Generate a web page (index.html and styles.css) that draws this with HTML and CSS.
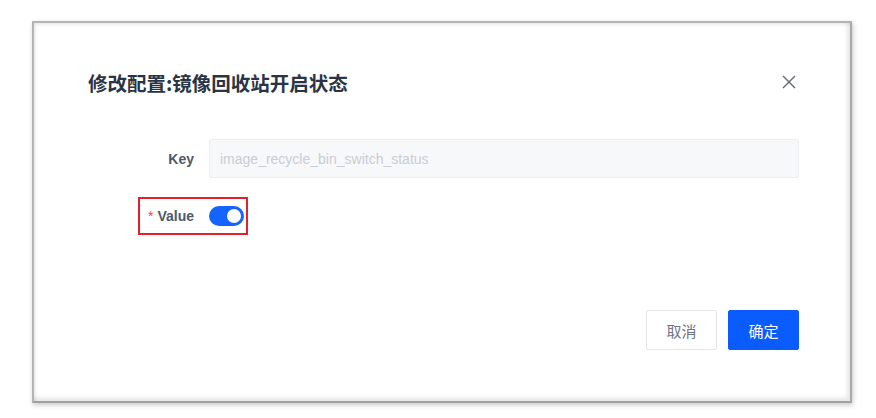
FILE: index.html
```html
<!DOCTYPE html>
<html lang="zh-CN">
<head>
<meta charset="utf-8">
<title>修改配置</title>
<link rel="stylesheet" href="styles.css">
</head>
<body>
<div class="frame">
  <div class="dialog">
    <div class="header">
      <h2 class="title">修改配置:镜像回收站开启状态</h2>
      <button class="close" aria-label="关闭">
        <svg width="14" height="14" viewBox="0 0 14 14"><path d="M1 1L13 13M13 1L1 13" stroke="#5c6677" stroke-width="1.4" fill="none"/></svg>
      </button>
    </div>
    <div class="form">
      <div class="row row-key">
        <label class="label">Key</label>
        <div class="input">image_recycle_bin_switch_status</div>
      </div>
      <div class="row row-value">
        <span class="mark"></span>
        <label class="label"><span class="req">*</span> Value</label>
        <div class="control"><span class="switch"><span class="knob"></span></span></div>
      </div>
    </div>
    <div class="footer">
      <button class="btn btn-cancel">取消</button>
      <button class="btn btn-ok">确定</button>
    </div>
  </div>
</div>
</body>
</html>
```
FILE: styles.css
```css
* { box-sizing: border-box; }
html, body { margin: 0; padding: 0; background: #ffffff; }
body { font-family: "Liberation Sans", "Noto Sans CJK SC", sans-serif; width: 876px; height: 418px; overflow: hidden; }

.frame {
  margin: 21px 0 0 32px;
  width: 820px;
  height: 382px;
  border: 2px solid #b4b4b4;
  border-right-color: #a8a8a8;
  border-bottom-color: #a0a0a0;
  box-shadow: 1px 2px 5px rgba(0,0,0,0.22), inset 2px 2px 3px rgba(0,0,0,0.08), inset -3px -3px 4px rgba(0,0,0,0.10);
  background: #ffffff;
}

.dialog {
  height: 100%;
  display: flex;
  flex-direction: column;
  padding: 0 51px 0 54px;
}

.header {
  display: flex;
  align-items: center;
  justify-content: space-between;
  height: 116px;
  padding-top: 2px;
}
.title {
  margin: 0;
  font-family: "Noto Sans CJK SC", sans-serif;
  font-size: 19.5px;
  font-weight: 700;
  color: #2b3445;
}
.close {
  border: 0;
  background: none;
  padding: 0;
  width: 14px;
  height: 14px;
  margin-right: 3px;
  display: flex;
}

.form {
  display: flex;
  flex-direction: column;
  gap: 19px;
}
.row {
  display: grid;
  grid-template-columns: 106px 1fr;
  column-gap: 15px;
  align-items: center;
  position: relative;
}
.label {
  text-align: right;
  font-size: 14px;
  font-weight: 700;
  color: #4e5969;
}
.req { color: #f53f3f; font-weight: 400; }
.input {
  height: 39px;
  width: 590px;
  background: #f7f8fa;
  border: 1px solid #eceef2;
  border-radius: 2px;
  padding: 0 10px;
  display: flex;
  align-items: center;
  font-size: 14px;
  color: #c9cdd4;
}
.row-value { height: 38px; }
.control { display: flex; align-items: center; }
.switch {
  width: 35px;
  height: 20px;
  border-radius: 10px;
  background: #1664ff;
  position: relative;
  display: block;
}
.knob {
  position: absolute;
  top: 3px;
  right: 3px;
  width: 14px;
  height: 14px;
  border-radius: 50%;
  background: #ffffff;
}
.mark {
  position: absolute;
  left: 50px;
  top: 0;
  width: 110px;
  height: 38px;
  border: 2px solid #e5202a;
  pointer-events: none;
}

.footer {
  margin-top: auto;
  margin-bottom: 51px;
  display: flex;
  justify-content: flex-end;
  gap: 11px;
}
.btn {
  width: 71px;
  height: 40px;
  border-radius: 2px;
  font-family: "Noto Sans CJK SC", sans-serif;
  font-size: 15px;
  cursor: pointer;
}
.btn-cancel {
  background: #ffffff;
  border: 1px solid #e3e5ea;
  color: #6b7585;
}
.btn-ok {
  background: #0b5cff;
  border: 1px solid #0b5cff;
  color: #ffffff;
}
```
